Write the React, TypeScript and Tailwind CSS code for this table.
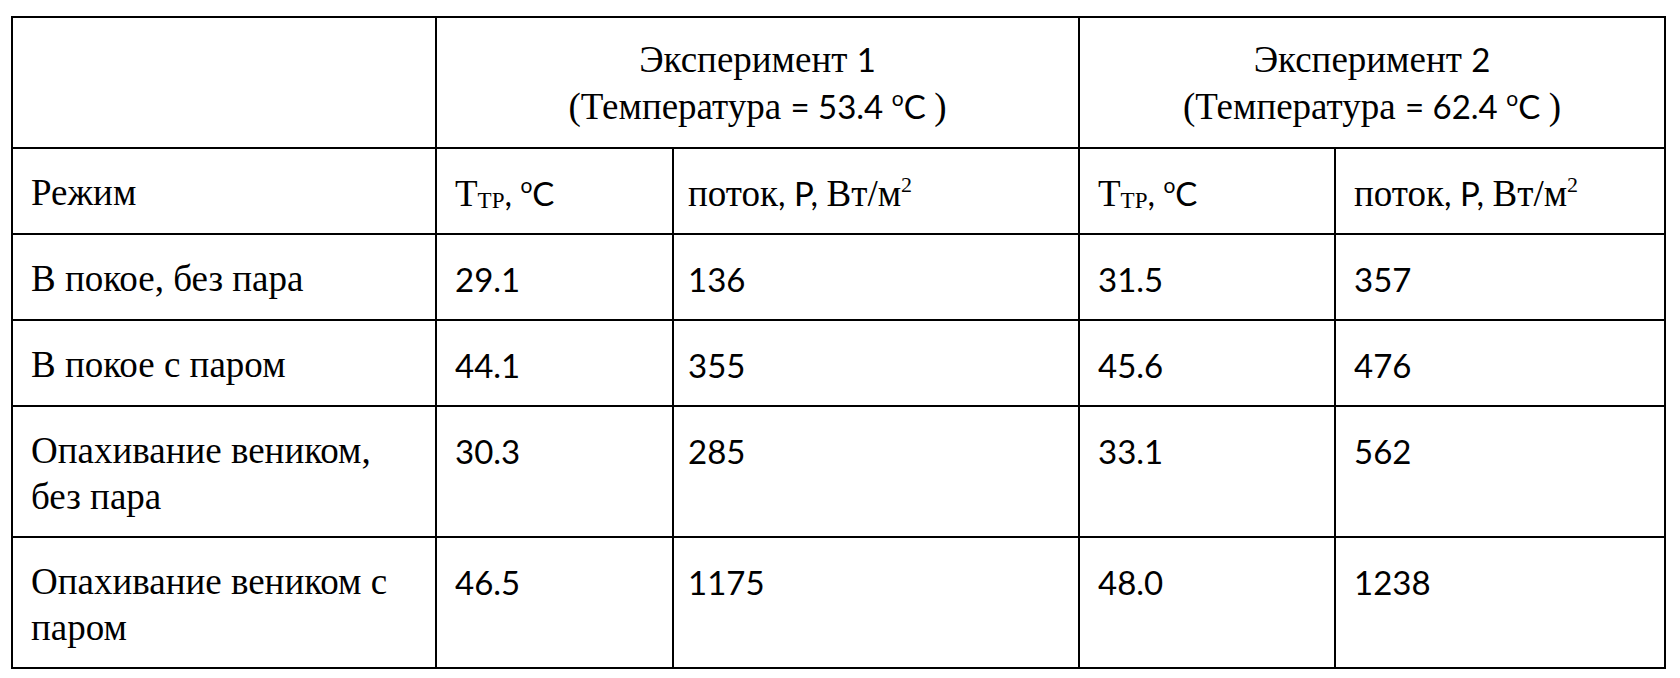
import React from "react";

const serif = "font-[family-name:Liberation_Serif,Times_New_Roman,serif] text-[37px]";
const sans = "font-[family-name:Lato,Liberation_Sans,sans-serif] text-[33px]";

function Num({ children }: { children: React.ReactNode }) {
  return <span className={sans}>{children}</span>;
}

function Deg() {
  return (
    <span className={sans}>
      <sup className="text-[21px] -top-[13px]">o</sup>C
    </span>
  );
}

function TempHead() {
  return (
    <>
      T<sub className="text-[23px] -bottom-[2px]">TP</sub>
      <Num>, </Num>
      <Deg />
    </>
  );
}

function FluxHead() {
  return (
    <>
      поток<Num>, P, </Num>Вт/м
      <sup className="text-[22px] -top-[14px]">2</sup>
    </>
  );
}

const rows = [
  { label: "В покое, без пара", t1: "29.1", p1: "136", t2: "31.5", p2: "357" },
  { label: "В покое с паром", t1: "44.1", p1: "355", t2: "45.6", p2: "476" },
  { label: "Опахивание веником, без пара", t1: "30.3", p1: "285", t2: "33.1", p2: "562" },
  { label: "Опахивание веником с паром", t1: "46.5", p1: "1175", t2: "48.0", p2: "1238" },
];

function Cell({ children, className = "pl-[18px]" }: { children?: React.ReactNode; className?: string }) {
  return (
    <div className={`bg-white pr-2 pt-[21px] leading-[46px] text-black ${serif} ${className}`}>
      {children}
    </div>
  );
}

function ExpHead({ n, temp }: { n: string; temp: string }) {
  return (
    <div className={`col-span-2 bg-white flex flex-col items-center justify-center leading-[47px] text-black ${serif}`}>
      <div>
        Эксперимент <Num>{n}</Num>
      </div>
      <div>
        (Температура <Num>= {temp} </Num>
        <Deg />
        <Num> </Num>)
      </div>
    </div>
  );
}

export default function App() {
  return (
    <div className="w-[1680px] h-[678px] bg-white overflow-hidden">
      <div className="ml-[11px] mt-[16px] inline-grid grid-cols-[422px_235px_404px_254px_328px] grid-rows-[129px_84px_84px_84px_129px_129px] gap-[2px] bg-black p-[2px]">
        <div className="bg-white" />
        <ExpHead n="1" temp="53.4" />
        <ExpHead n="2" temp="62.4" />

        <Cell>Режим</Cell>
        <Cell>
          <TempHead />
        </Cell>
        <Cell className="pl-[14px]">
          <FluxHead />
        </Cell>
        <Cell>
          <TempHead />
        </Cell>
        <Cell>
          <FluxHead />
        </Cell>

        {rows.map((r) => (
          <React.Fragment key={r.label}>
            <Cell>{r.label}</Cell>
            <Cell>
              <Num>{r.t1}</Num>
            </Cell>
            <Cell className="pl-[14px]">
              <Num>{r.p1}</Num>
            </Cell>
            <Cell>
              <Num>{r.t2}</Num>
            </Cell>
            <Cell>
              <Num>{r.p2}</Num>
            </Cell>
          </React.Fragment>
        ))}
      </div>
    </div>
  );
}
